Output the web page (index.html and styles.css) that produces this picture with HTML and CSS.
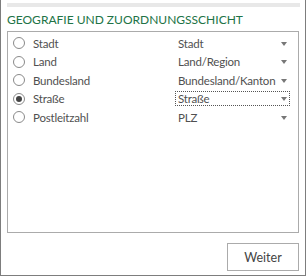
FILE: index.html
```html
<!doctype html>
<html lang="de">
<head>
    <meta charset="UTF-8">
    <title>Geografie und Zuordnungsschicht</title>
    <link rel="stylesheet" href="styles.css">
</head>
<body>

<div class="pane">
    <div class="topbar"></div>
    <h2 class="title">GEOGRAFIE UND ZUORDNUNGSSCHICHT</h2>

    <div class="fields">
        <div class="row">
            <span class="radio"></span>
            <span class="name">Stadt</span>
            <span class="select">Stadt<i class="arrow"></i></span>
        </div>
        <div class="row">
            <span class="radio"></span>
            <span class="name">Land</span>
            <span class="select">Land/Region<i class="arrow"></i></span>
        </div>
        <div class="row">
            <span class="radio"></span>
            <span class="name">Bundesland</span>
            <span class="select">Bundesland/Kanton<i class="arrow"></i></span>
        </div>
        <div class="row">
            <span class="radio on"></span>
            <span class="name">Straße</span>
            <span class="select focus">Straße<i class="arrow"></i></span>
        </div>
        <div class="row">
            <span class="radio"></span>
            <span class="name">Postleitzahl</span>
            <span class="select">PLZ<i class="arrow"></i></span>
        </div>
    </div>

    <div class="actions">
        <button class="btn">Weiter</button>
    </div>
</div>

</body>
</html>
```

FILE: styles.css
```css
*{margin:0;padding:0;box-sizing:border-box;}
body{
    background:#fff;
    font-family:Lato,"Open Sans",sans-serif;
    color:#505050;
}
.pane{
    width:306px;
    height:276px;
    border:1px solid #7d7d7d;
    border-top:0;
    padding:3px 6px 0 6px;
    display:flex;
    flex-direction:column;
}
.topbar{
    height:4px;
    background:#e8e8e8;
    margin-right:-1px;
}
.title{
    margin-top:5px;
    font-size:12px;
    line-height:15px;
    font-weight:normal;
    color:#217346;
}
.fields{
    margin-top:4px;
    height:202px;
    border:1px solid #ababab;
    padding-top:2px;
}
.row{
    display:flex;
    align-items:center;
    height:18.5px;
    padding-left:5px;
    font-size:11.5px;
    letter-spacing:-0.2px;
}
.radio{
    width:12px;
    height:12px;
    border:1px solid #8a8a8a;
    border-radius:50%;
    display:flex;
    align-items:center;
    justify-content:center;
}
.radio.on::after{
    content:"";
    width:6px;
    height:6px;
    border-radius:50%;
    background:#444;
}
.name{
    flex:1;
    margin-left:8px;
}
.select{
    position:relative;
    width:115px;
    height:15px;
    line-height:13px;
    margin-right:8px;
    padding-left:2px;
    border:1px dotted transparent;
    white-space:nowrap;
}
.select.focus{
    border-color:#555;
}
.arrow{
    position:absolute;
    right:2px;
    top:5px;
    border-left:3px solid transparent;
    border-right:3px solid transparent;
    border-top:4px solid #777;
}
.actions{
    display:flex;
    justify-content:flex-end;
    margin-top:10px;
}
.btn{
    width:72px;
    height:28px;
    border:1px solid #ababab;
    background:#fff;
    font-family:inherit;
    font-size:12.5px;
    color:#444;
}
```
